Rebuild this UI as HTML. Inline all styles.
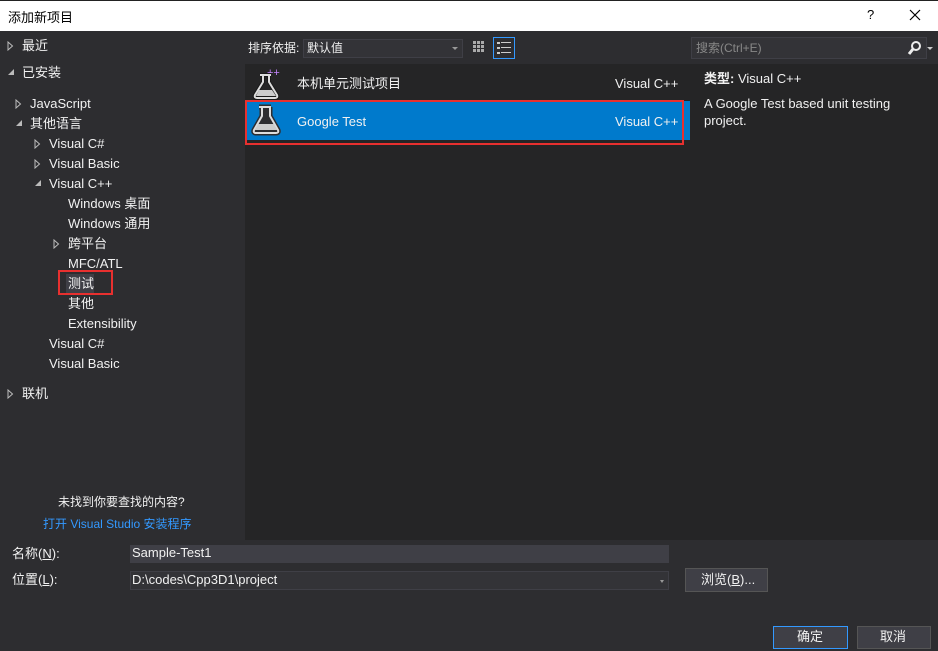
<!DOCTYPE html>
<html><head><meta charset="utf-8"><style>
*{margin:0;padding:0;box-sizing:border-box}
body{width:938px;height:651px;background:#2d2d30;font-family:"Liberation Sans","Noto Sans CJK SC",sans-serif;font-size:13px;color:#f1f1f1;position:relative;overflow:hidden}
.a{position:absolute;white-space:nowrap}
.t{position:absolute;white-space:nowrap;line-height:20px}
.tri{position:absolute}
</style></head><body>
<div class="a" style="left:0;top:0;width:938px;height:31px;background:#fff;border-top:1px solid #222"></div>
<div class="a" style="left:8px;top:7px;color:#000;font-size:13px">添加新项目</div>
<div class="a" style="left:867px;top:7px;color:#000;font-size:13px">?</div>
<svg class="a" style="left:909px;top:9px" width="12" height="12"><path d="M1 1L11 11M11 1L1 11" stroke="#000" stroke-width="1.2"/></svg>

<div class="a" style="left:0;top:31px;width:244px;height:509px;background:#2d2d30"></div>
<svg class="tri" style="left:7px;top:41px" width="7" height="10"><path d="M1 1v8l4.5-4z" fill="none" stroke="#bbb"/></svg><div class="t" style="left:22px;top:36px">最近</div>
<div class="a" style="left:8px;top:69px;width:0;height:0;border-left:6px solid transparent;border-bottom:6px solid #bbb"></div><div class="t" style="left:22px;top:63px">已安装</div>
<svg class="tri" style="left:15px;top:99px" width="7" height="10"><path d="M1 1v8l4.5-4z" fill="none" stroke="#bbb"/></svg><div class="t" style="left:30px;top:94px">JavaScript</div>
<div class="a" style="left:16px;top:120px;width:0;height:0;border-left:6px solid transparent;border-bottom:6px solid #bbb"></div><div class="t" style="left:30px;top:114px">其他语言</div>
<svg class="tri" style="left:34px;top:139px" width="7" height="10"><path d="M1 1v8l4.5-4z" fill="none" stroke="#bbb"/></svg><div class="t" style="left:49px;top:134px">Visual C#</div>
<svg class="tri" style="left:34px;top:159px" width="7" height="10"><path d="M1 1v8l4.5-4z" fill="none" stroke="#bbb"/></svg><div class="t" style="left:49px;top:154px">Visual Basic</div>
<div class="a" style="left:35px;top:180px;width:0;height:0;border-left:6px solid transparent;border-bottom:6px solid #bbb"></div><div class="t" style="left:49px;top:174px">Visual C++</div>
<div class="t" style="left:68px;top:194px">Windows 桌面</div>
<div class="t" style="left:68px;top:214px">Windows 通用</div>
<svg class="tri" style="left:53px;top:239px" width="7" height="10"><path d="M1 1v8l4.5-4z" fill="none" stroke="#bbb"/></svg><div class="t" style="left:68px;top:234px">跨平台</div>
<div class="t" style="left:68px;top:254px">MFC/ATL</div>
<div class="a" style="left:66px;top:274px;width:28px;height:19px;background:#3f3f46"></div>
<div class="t" style="left:68px;top:274px">测试</div>
<div class="a" style="left:58px;top:270px;width:55px;height:25px;border:2px solid #e8302f"></div>
<div class="t" style="left:68px;top:294px">其他</div>
<div class="t" style="left:68px;top:314px">Extensibility</div>
<div class="t" style="left:49px;top:334px">Visual C#</div>
<div class="t" style="left:49px;top:354px">Visual Basic</div>
<svg class="tri" style="left:7px;top:389px" width="7" height="10"><path d="M1 1v8l4.5-4z" fill="none" stroke="#bbb"/></svg><div class="t" style="left:22px;top:384px">联机</div>
<div class="t" style="left:58px;top:492px;font-size:12px">未找到你要查找的内容?</div>
<div class="t" style="left:43px;top:514px;font-size:12px;color:#3399ff">打开 Visual Studio 安装程序</div>

<div class="t" style="left:248px;top:38px;font-size:12px">排序依据:</div>
<div class="a" style="left:303px;top:39px;width:160px;height:19px;background:#333337;border:1px solid #3f3f46"></div>
<div class="t" style="left:307px;top:38px;font-size:12px">默认值</div>
<div class="a" style="left:452px;top:47px;border-left:3px solid transparent;border-right:3px solid transparent;border-top:3px solid #999"></div>
<svg class="a" style="left:472px;top:40px" width="14" height="14"><g fill="#aaa"><rect x="1" y="1" width="3" height="3"/><rect x="5" y="1" width="3" height="3"/><rect x="9" y="1" width="3" height="3"/><rect x="1" y="5" width="3" height="3"/><rect x="5" y="5" width="3" height="3"/><rect x="9" y="5" width="3" height="3"/><rect x="1" y="9" width="3" height="3"/><rect x="5" y="9" width="3" height="3"/><rect x="9" y="9" width="3" height="3"/></g></svg>
<div class="a" style="left:493px;top:37px;width:22px;height:22px;border:1px solid #3399ff"></div>
<svg class="a" style="left:497px;top:41px" width="14" height="14"><g fill="#ccc"><rect x="0" y="1" width="3" height="2"/><rect x="4" y="1" width="10" height="1"/><rect x="0" y="6" width="3" height="2"/><rect x="4" y="6" width="10" height="1"/><rect x="0" y="11" width="3" height="2"/><rect x="4" y="11" width="10" height="1"/></g></svg>
<div class="a" style="left:245px;top:64px;width:446px;height:476px;background:#252526"></div>
<svg class="a" style="left:252px;top:67px" width="36" height="34"><text x="15" y="9" fill="#c586ff" font-size="11" font-family="Liberation Sans">++</text><path d="M8 8h11M11 8v7L3 28q-1 3 2 3h18q3 0 2-3L17 15V8z" fill="#252526" stroke="#1a1a1a" stroke-width="4"/><path d="M8 8h11M11 8v7L3 28q-1 3 2 3h18q3 0 2-3L17 15V8z" fill="none" stroke="#ddd" stroke-width="2"/><path d="M7 23h13l4 6H4z" fill="#ccc"/></svg>
<div class="t" style="left:297px;top:74px">本机单元测试项目</div>
<div class="t" style="left:615px;top:74px">Visual C++</div>
<div class="a" style="left:246px;top:101px;width:444px;height:39px;background:#007acc"></div>
<svg class="a" style="left:250px;top:103px" width="36" height="34"><path d="M9 4h12M12 4v9L4 27q-1 3 2 3h20q3 0 2-3L20 13V4" fill="#2d2d30" stroke="#2d2d30" stroke-width="5"/><path d="M9 4h12M12 4v9L4 27q-1 3 2 3h20q3 0 2-3L20 13V4" fill="none" stroke="#ddd" stroke-width="2"/><path d="M8 21h16l3 6H5z" fill="#ccc"/></svg>
<div class="t" style="left:297px;top:112px">Google Test</div>
<div class="t" style="left:615px;top:112px">Visual C++</div>
<div class="a" style="left:245px;top:100px;width:439px;height:45px;border:2px solid #e8302f"></div>

<div class="a" style="left:691px;top:37px;width:236px;height:22px;background:#333337;border:1px solid #3f3f46"></div>
<div class="t" style="left:696px;top:38px;font-size:12px;color:#888">搜索(Ctrl+E)</div>
<svg class="a" style="left:907px;top:40px" width="14" height="16"><circle cx="9" cy="6" r="4" fill="none" stroke="#eee" stroke-width="2"/><path d="M6 9l-4 5" stroke="#eee" stroke-width="3"/></svg>
<div class="a" style="left:927px;top:47px;border-left:3px solid transparent;border-right:3px solid transparent;border-top:3px solid #ccc"></div>
<div class="a" style="left:691px;top:64px;width:247px;height:476px;background:#252526"></div>
<div class="t" style="left:704px;top:69px"><b>类型:</b> Visual C++</div>
<div class="t" style="left:704px;top:95px;line-height:17px;white-space:normal;width:220px">A Google Test based unit testing project.</div>

<div class="t" style="left:12px;top:544px">名称(<u>N</u>):</div>
<div class="a" style="left:130px;top:545px;width:539px;height:18px;background:#3f3f46"></div>
<div class="t" style="left:132px;top:543px">Sample-Test1</div>
<div class="t" style="left:12px;top:570px">位置(<u>L</u>):</div>
<div class="a" style="left:130px;top:571px;width:539px;height:19px;background:#333337;border:1px solid #3f3f46"></div>
<div class="t" style="left:132px;top:570px">D:\codes\Cpp3D1\project</div>
<div class="a" style="left:660px;top:580px;border-left:2px solid transparent;border-right:2px solid transparent;border-top:3px solid #999"></div>
<div class="a" style="left:685px;top:568px;width:83px;height:24px;background:#3f3f46;border:1px solid #555"></div>
<div class="t" style="left:701px;top:570px">浏览(<u>B</u>)...</div>
<div class="a" style="left:773px;top:626px;width:75px;height:23px;background:#3f3f46;border:1px solid #3399ff"></div>
<div class="t" style="left:797px;top:627px">确定</div>
<div class="a" style="left:857px;top:626px;width:74px;height:23px;background:#3f3f46;border:1px solid #555"></div>
<div class="t" style="left:880px;top:627px">取消</div>
</body></html>
